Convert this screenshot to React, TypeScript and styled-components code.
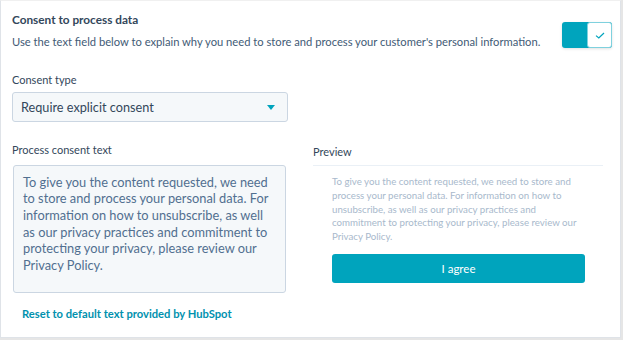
import React from "react";
import styled, { createGlobalStyle } from "styled-components";

const Global = createGlobalStyle`
  html, body {
    margin: 0;
    padding: 0;
    background: #e6e6e6;
  }
  body {
    font-family: Lato, "Liberation Sans", sans-serif;
    color: #33475b;
  }
`;

const Card = styled.div`
  box-sizing: border-box;
  width: 621px;
  height: 338px;
  background: #ffffff;
  border: 1px solid #dfe3e8;
  border-top-color: #f0f0f0;
  padding: 10px 0 0 11px;
`;

const Header = styled.div`
  display: flex;
  justify-content: space-between;
  align-items: flex-start;
  padding-right: 8px;
`;

const Title = styled.h2`
  margin: 0;
  font-size: 11.8px;
  font-weight: 700;
  line-height: 18px;
  color: #33475b;
`;

const Subtitle = styled.p`
  margin: 5px 0 0;
  font-size: 11.2px;
  line-height: 16px;
  color: #425b76;
`;

const Toggle = styled.div`
  display: flex;
  margin-top: 11px;
  width: 50px;
  height: 26px;
  border-radius: 3px;
  background: #00a4bd;
  box-shadow: 0 1px 3px rgba(0, 0, 0, 0.12);
`;

const ToggleFill = styled.div`
  flex: 1;
`;

const Knob = styled.div`
  box-sizing: border-box;
  width: 25px;
  height: 26px;
  background: #ffffff;
  border: 1px solid #7fd1de;
  border-radius: 3px;
  display: flex;
  align-items: center;
  justify-content: center;
`;

const Label = styled.div`
  font-size: 11px;
  line-height: 14px;
  font-weight: 400;
  color: #33475b;
`;

const Field = styled.div`
  margin-top: 23px;
`;

const Select = styled.div`
  box-sizing: border-box;
  width: 276px;
  height: 30px;
  margin-top: 5px;
  background: #f5f8fa;
  border: 1px solid #cbd6e2;
  border-radius: 3px;
  display: flex;
  align-items: center;
  justify-content: space-between;
  padding: 0 12px 0 8px;
  font-size: 12.7px;
  color: #33475b;
`;

const Caret = styled.span`
  width: 0;
  height: 0;
  border-left: 4.5px solid transparent;
  border-right: 4.5px solid transparent;
  border-top: 5px solid #00a4bd;
`;

const Columns = styled.div`
  display: grid;
  grid-template-columns: 276px 290px;
  column-gap: 25px;
  margin-top: 21px;
`;

const Column = styled.div`
  display: flex;
  flex-direction: column;
  align-items: flex-start;
`;

const TextBox = styled.div`
  box-sizing: border-box;
  width: 273px;
  height: 128px;
  margin: 8px 0 0 1px;
  background: #f5f8fa;
  border: 1px solid #cbd6e2;
  border-radius: 3px;
  padding: 7.5px 8px 0 9px;
  font-size: 12.8px;
  line-height: 16.7px;
  color: #516f90;
`;

const ResetLink = styled.a`
  margin: 14px 0 0 10px;
  font-size: 11.2px;
  line-height: 14px;
  font-weight: 700;
  color: #0091ae;
  text-decoration: none;
`;

const PreviewHeader = styled.div`
  align-self: stretch;
  font-size: 11px;
  line-height: 14px;
  color: #33475b;
  margin-top: 2px;
  padding-bottom: 6px;
  border-bottom: 1px solid #eaf0f6;
`;

const PreviewBody = styled.div`
  padding: 9px 18px 0 19px;
`;

const PreviewText = styled.p`
  margin: 0;
  font-size: 9.7px;
  line-height: 13.8px;
  color: #a8b9cc;
`;

const AgreeButton = styled.button`
  display: block;
  width: 253px;
  height: 29px;
  margin-top: 10px;
  padding: 0;
  border: none;
  border-radius: 3px;
  background: #00a4bd;
  color: #ffffff;
  font-family: Lato, "Liberation Sans", sans-serif;
  font-size: 11.5px;
`;

const consentText =
  "To give you the content requested, we need to store and process your personal data. For information on how to unsubscribe, as well as our privacy practices and commitment to protecting your privacy, please review our Privacy Policy.";

export default function App() {
  return (
    <>
      <Global />
      <Card>
        <Header>
          <div>
            <Title>Consent to process data</Title>
            <Subtitle>
              Use the text field below to explain why you need to store and process your
              customer's personal information.
            </Subtitle>
          </div>
          <Toggle>
            <ToggleFill />
            <Knob>
              <svg width="10" height="7" viewBox="0 0 10 7">
                <path d="M1 3.6 L3.8 6 L9 1" fill="none" stroke="#00a4bd" strokeWidth="1.2" />
              </svg>
            </Knob>
          </Toggle>
        </Header>

        <Field>
          <Label>Consent type</Label>
          <Select>
            <span>Require explicit consent</span>
            <Caret />
          </Select>
        </Field>

        <Columns>
          <Column>
            <Label>Process consent text</Label>
            <TextBox>{consentText}</TextBox>
            <ResetLink href="#">Reset to default text provided by HubSpot</ResetLink>
          </Column>
          <Column>
            <PreviewHeader>Preview</PreviewHeader>
            <PreviewBody>
              <PreviewText>{consentText}</PreviewText>
              <AgreeButton>I agree</AgreeButton>
            </PreviewBody>
          </Column>
        </Columns>
      </Card>
    </>
  );
}
